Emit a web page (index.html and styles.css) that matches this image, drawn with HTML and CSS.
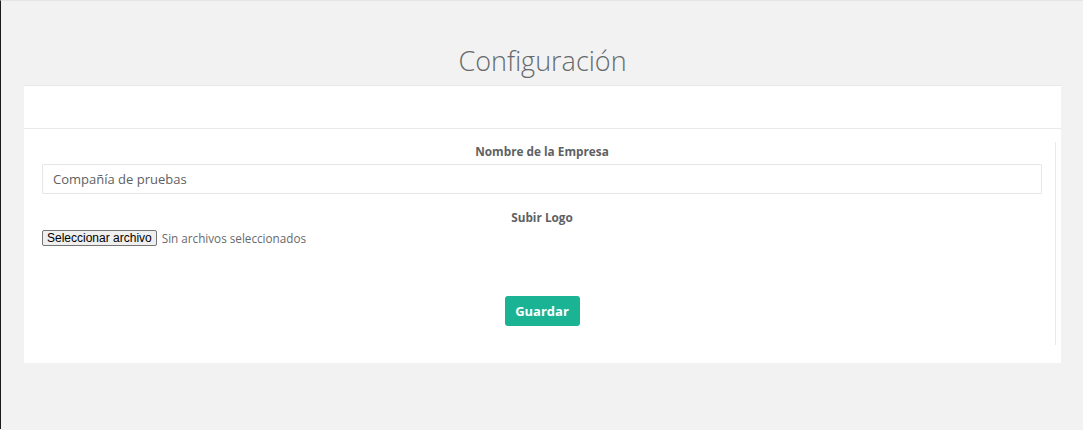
FILE: index.html
```html
<!DOCTYPE html>
<html lang="es">
<head>
<meta charset="utf-8">
<title>Configuración</title>
<link rel="stylesheet" href="styles.css">
</head>
<body>
<div class="page">
  <h2 class="title">Configuración</h2>
  <div class="panel">
    <div class="panel-head"></div>
    <div class="panel-body">
      <form class="col">
        <label class="lbl">Nombre de la Empresa</label>
        <input class="field" type="text" value="Compañía de pruebas">
        <label class="lbl lbl-2">Subir Logo</label>
        <div class="file">
          <button type="button" class="file-btn">Seleccionar archivo</button>
          <span class="file-txt">Sin archivos seleccionados</span>
        </div>
        <div class="actions">
          <button type="button" class="save">Guardar</button>
        </div>
      </form>
    </div>
  </div>
</div>
</body>
</html>
```

FILE: styles.css
```css
html, body {
  margin: 0;
  padding: 0;
}
body {
  background: #f2f2f2;
  border-top: 1px solid #e3e5e8;
  border-left: 1px solid #1a1a1a;
  min-height: 429px;
  box-sizing: border-box;
  font-family: "Open Sans", "Liberation Sans", sans-serif;
  color: #676a6c;
}
.page {
  padding: 43px 22px 0 23px;
}
.title {
  margin: 0 0 7px;
  text-align: center;
  font-size: 27px;
  line-height: 34px;
  font-weight: 300;
  color: #676a6c;
}
.panel {
  background: #fff;
  border-top: 1px solid #e7e7e7;
}
.panel-head {
  height: 42px;
  border-bottom: 1px solid #e7eaec;
}
.panel-body {
  padding: 13px 5px 18px 18px;
}
.col {
  margin: 0;
  border-right: 1px solid #e7eaec;
  padding-right: 13px;
  display: flex;
  flex-direction: column;
}
.lbl {
  display: block;
  text-align: center;
  font-size: 11.8px;
  line-height: 18px;
  font-weight: 700;
  color: #5e6163;
  margin-bottom: 4px;
}
.lbl-2 {
  margin-top: 14px;
  margin-bottom: 4px;
}
.field {
  display: block;
  box-sizing: border-box;
  width: 100%;
  height: 30px;
  border: 1px solid #e5e6e7;
  border-radius: 1px;
  padding: 0 10px;
  font-family: "Open Sans", "Liberation Sans", sans-serif;
  font-size: 13px;
  color: #5e6163;
  outline: none;
}
.file {
  display: flex;
  align-items: center;
  gap: 5px;
  height: 16px;
}
.file-btn {
  box-sizing: border-box;
  height: 16px;
  margin: 0;
  padding: 0 4px;
  border: 1px solid #767676;
  border-radius: 2px;
  background: #efefef;
  font-family: "Liberation Sans", Arial, sans-serif;
  font-size: 12px;
  line-height: 14px;
  color: #000;
}
.file-txt {
  font-size: 11.7px;
  color: #676a6c;
}
.actions {
  display: flex;
  justify-content: center;
  padding-top: 50px;
  padding-bottom: 19px;
}
.save {
  width: 75px;
  height: 30px;
  margin: 0;
  border: 0;
  border-radius: 3px;
  background: #1ab394;
  color: #fff;
  font-family: "Open Sans", "Liberation Sans", sans-serif;
  font-size: 13px;
  font-weight: 700;
}
```
